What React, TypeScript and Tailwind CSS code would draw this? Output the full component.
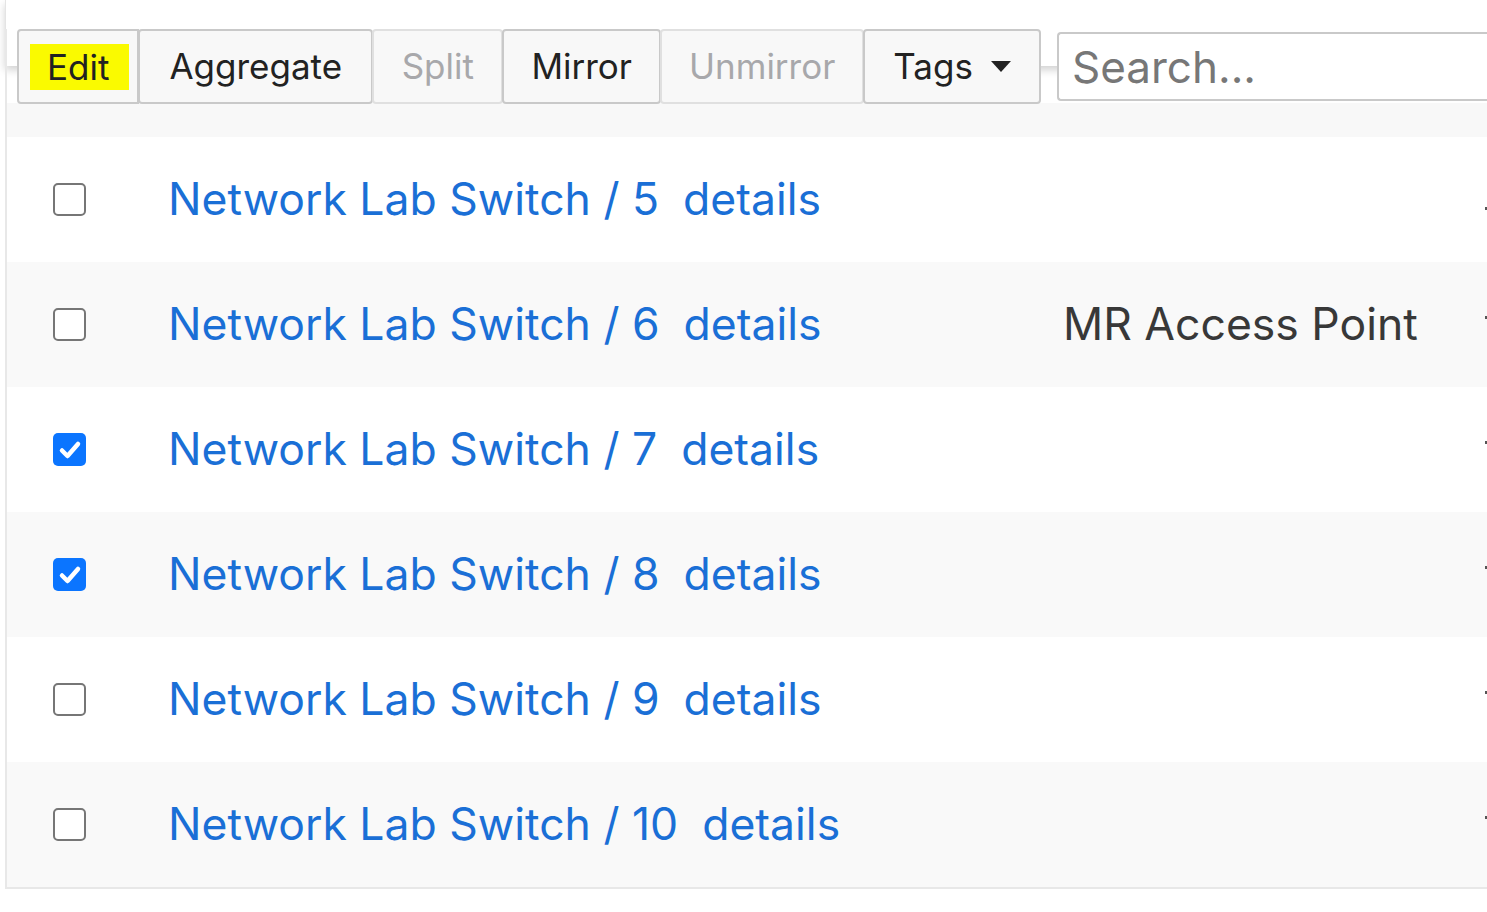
import React from "react";

const rows = [
  { n: 5, checked: false, model: "" },
  { n: 6, checked: false, model: "MR Access Point" },
  { n: 7, checked: true, model: "" },
  { n: 8, checked: true, model: "" },
  { n: 9, checked: false, model: "" },
  { n: 10, checked: false, model: "" },
];

function Checkbox({ checked }: { checked: boolean }) {
  if (checked) {
    return (
      <span className="flex h-[33px] w-[33px] items-center justify-center rounded-[5px] bg-[#0b75ff]">
        <svg width="24" height="24" viewBox="0 0 24 24">
          <path d="M4 12.5 L9.5 18 L20 6" fill="none" stroke="white" strokeWidth="4.5" strokeLinecap="round" strokeLinejoin="round" />
        </svg>
      </span>
    );
  }
  return <span className="block h-[33px] w-[33px] rounded-[5px] border-[2.5px] border-[#767676] bg-white" />;
}

function ToolButton({ label, disabled, pad }: { label: string; disabled?: boolean; pad: string }) {
  return (
    <button
      className={
        "-ml-[1px] flex h-[75px] items-center rounded-[4px] border-2 bg-[#f8f8f8] text-[35px] " +
        pad +
        (disabled ? " border-[#e0e0e0] text-[#a8a8ab]" : " border-[#c9c9c9] text-[#222]")
      }
    >
      {label}
    </button>
  );
}

export default function App() {
  return (
    <div className="min-h-screen w-full overflow-hidden bg-white font-['Inter','Liberation_Sans',sans-serif]">
      {/* card edge above the toolbar */}
      <div className="ml-[5px] h-[66px] border-l border-[#e4e4e4] bg-white shadow-[0_4px_8px_rgba(0,0,0,0.18)]" />

      <div className="relative -mt-[37px] ml-[5px] border-b-2 border-l-2 border-[#e8e8e8]">
        {/* toolbar */}
        <div className="flex items-start pl-[10px]">
          <button className="flex h-[75px] items-center rounded-l-[4px] border-2 border-[#c9c9c9] bg-[#f8f8f8] pl-[11px] pr-[8px] text-[35px] text-[#222]">
            <span className="bg-[#fafa00] pl-[17px] pr-[20px] py-[2px] leading-[42px]">Edit</span>
          </button>
          <ToolButton label="Aggregate" pad="px-[29px]" />
          <ToolButton label="Split" disabled pad="px-[27.5px]" />
          <ToolButton label="Mirror" pad="px-[27px]" />
          <ToolButton label="Unmirror" disabled pad="px-[27px]" />
          <button className="-ml-[1px] flex h-[75px] items-center gap-[18px] rounded-[4px] border-2 border-[#c9c9c9] bg-[#f8f8f8] pl-[28px] pr-[28px] text-[35px] text-[#222]">
            Tags
            <svg width="20" height="11" viewBox="0 0 20 11">
              <path d="M0 0 H20 L10 11 Z" fill="#222" />
            </svg>
          </button>
          <div className="ml-[16px] mt-[3px] flex h-[69px] flex-1 items-center rounded-l-[4px] border-2 border-r-0 border-[#c9c9c9] bg-white pl-[13px]">
            <span className="text-[44px] text-[#777]">Search...</span>
          </div>
        </div>
        <div className="-mt-[1px] h-[34px] bg-[#f8f8f8]" />

        {/* rows */}
        {rows.map((r, i) => (
          <div key={r.n} className={"flex h-[125px] items-center " + (i % 2 === 1 ? "bg-[#f9f9f9]" : "bg-white")}>
            <div className="w-[161px] pl-[46px]">
              <Checkbox checked={r.checked} />
            </div>
            <div className="w-[895px] text-[44.5px] text-[#1a6fd6]">
              Network Lab Switch / {r.n}
              <span className="ml-[24px]">details</span>
            </div>
            <div className="flex-1 text-[44.5px] text-[#383838]">{r.model}</div>
            <span className={"h-[3px] w-[2px] bg-[#555] " + (i === 0 ? "mt-[18px]" : "mb-[14px]")} />
          </div>
        ))}
      </div>
    </div>
  );
}
